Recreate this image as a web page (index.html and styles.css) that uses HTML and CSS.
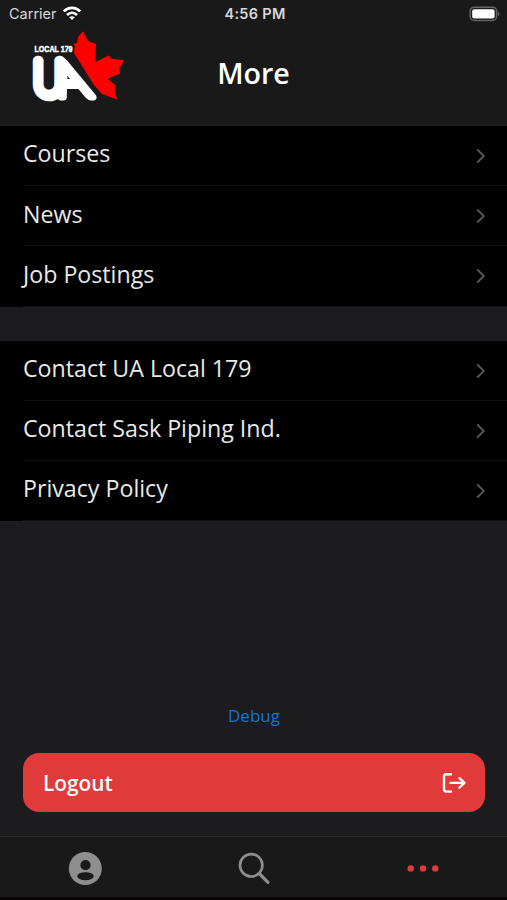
FILE: index.html
```html
<!DOCTYPE html>
<html lang="en">
  <head>
    <meta charset="UTF-8" />
    <meta name="viewport" content="width=device-width, initial-scale=1.0" />
    <title>More</title>
    <link rel="stylesheet" href="styles.css" />
  </head>
  <body>
    <svg width="0" height="0" class="defs">
      <symbol id="chevron" viewBox="0 0 12 18">
        <path d="M2.2 2.5 L8.8 9 L2.2 15.5" fill="none" stroke="currentColor" stroke-width="1.9" />
      </symbol>
    </svg>

    <header class="header">
      <div class="status-bar">
        <div class="carrier">
          <span>Carrier</span>
          <svg width="20" height="15" viewBox="0 0 20 15" fill="none" stroke="#fff" stroke-width="2.7">
            <path d="M1.8 5.4 C6.5 .8 13.5 .8 18.2 5.4" />
            <path d="M5 9 C8 6.1 12 6.1 15 9" />
            <path d="M10 14 L7.2 11.2 C8.8 9.8 11.2 9.8 12.8 11.2 Z" fill="#fff" stroke="none" />
          </svg>
        </div>
        <span class="time">4:56 PM</span>
        <svg class="battery" width="32" height="16" viewBox="0 0 32 16">
          <rect x="1.2" y="1.2" width="26.4" height="13.2" rx="4" fill="none" stroke="#656565" stroke-width="1.5" />
          <rect x="3.2" y="3.2" width="22.4" height="9.2" rx="2" fill="#fff" />
          <path d="M29 5.4 Q32 7.8 29 10.2 Z" fill="#656565" />
        </svg>
      </div>

      <div class="title-bar">
        <svg class="logo" width="96" height="92" viewBox="0 0 96 92">
          <path
            fill="#f00"
            d="M53 3.3 L57.7 12.7 L66 16 L65.3 34.3 L78.3 27.5 L82.3 31 L94 32 L89.5 40 L90 45.5 L77.7 51 L86 57.5 L84.5 62 L87 71.5 L72 66 L64 57 L44 25 L45 18.5 L43.5 16 L47 15 L48 9 Z"
          />
          <text class="logo-small" x="4.5" y="23.5" textLength="38" lengthAdjust="spacingAndGlyphs">LOCAL 179</text>
          <g class="logo-letters">
            <text transform="translate(3.4 68) scale(.91 1)" stroke-width="10.6">U</text>
            <text transform="translate(28.2 68) matrix(1.15 0 .4 1 0 0)" stroke-width="9">A</text>
          </g>
        </svg>
        <h1>More</h1>
      </div>
    </header>

    <main class="content">
      <ul class="menu">
        <li><a href="#"><span>Courses</span><svg><use href="#chevron" /></svg></a></li>
        <li><a href="#"><span>News</span><svg><use href="#chevron" /></svg></a></li>
        <li><a href="#"><span>Job Postings</span><svg><use href="#chevron" /></svg></a></li>
      </ul>

      <ul class="menu">
        <li><a href="#"><span>Contact UA Local 179</span><svg><use href="#chevron" /></svg></a></li>
        <li><a href="#"><span>Contact Sask Piping Ind.</span><svg><use href="#chevron" /></svg></a></li>
        <li><a href="#"><span>Privacy Policy</span><svg><use href="#chevron" /></svg></a></li>
      </ul>

      <div class="actions">
        <a class="debug" href="#">Debug</a>
        <button class="logout" type="button">
          <span>Logout</span>
          <svg width="24" height="22" viewBox="0 0 24 22" fill="none" stroke="#fff" stroke-width="2.4" stroke-linecap="round" stroke-linejoin="round">
            <path d="M9 2.2 H4.5 Q2 2.2 2 4.7 V17.1 Q2 19.6 4.5 19.6 H9" />
            <path d="M8.5 10.9 H22.2 M17.5 6.2 L22.4 10.9 L17.5 15.6" />
          </svg>
        </button>
      </div>
    </main>

    <nav class="tabs">
      <a href="#" aria-label="Profile">
        <svg width="34" height="34" viewBox="0 0 34 34">
          <circle cx="17.3" cy="17.5" r="16.5" fill="#8e8e8e" />
          <circle cx="17.5" cy="14.2" r="5.1" fill="#191919" />
          <ellipse cx="17.5" cy="25.2" rx="8.2" ry="4" fill="#191919" />
        </svg>
      </a>
      <a href="#" aria-label="Search">
        <svg width="34" height="34" viewBox="0 0 34 34" fill="none" stroke="#8e8e8e">
          <circle cx="14.2" cy="14.3" r="11.2" stroke-width="2.6" />
          <path d="M22.2 22.5 L31 31.3" stroke-width="3.2" stroke-linecap="round" />
        </svg>
      </a>
      <a href="#" aria-label="More">
        <svg width="34" height="34" viewBox="0 0 34 34" fill="#e03a3a">
          <circle cx="4.7" cy="17.4" r="3.2" />
          <circle cx="17" cy="17.4" r="3.2" />
          <circle cx="29.3" cy="17.4" r="3.2" />
        </svg>
      </a>
    </nav>
  </body>
</html>
```

FILE: styles.css
```css
* {
  box-sizing: border-box;
}

body {
  margin: 0;
  height: 100vh;
  display: flex;
  flex-direction: column;
  overflow: hidden;
  background: #1c1c1e;
  color: #e9e9e9;
  font-family: "Open Sans", "Noto Sans", sans-serif;
}

a {
  color: inherit;
  text-decoration: none;
}

svg {
  display: block;
}

.defs {
  position: absolute;
}

.header {
  height: 126px;
  flex: none;
  background: #191919;
}

.status-bar {
  display: grid;
  grid-template-columns: 1fr auto 1fr;
  align-items: center;
  height: 27px;
  padding: 0 6px 0 9px;
  font-family: Inter, sans-serif;
  font-size: 14.5px;
  color: #d8d8d8;
}

.carrier {
  display: flex;
  align-items: center;
  gap: 5px;
}

.time {
  font-weight: 600;
  letter-spacing: 0.3px;
}

.battery {
  justify-self: end;
}

.title-bar {
  display: grid;
  grid-template-columns: 1fr auto 1fr;
  align-items: start;
  padding-top: 1px;
}

.logo {
  margin-left: 30px;
}

.logo-small {
  font: bold 8.5px "Liberation Sans", sans-serif;
  fill: #fff;
  stroke: #fff;
  stroke-width: 0.5;
}

.logo-letters {
  font: 100 47px Inter, sans-serif;
  fill: #fff;
  stroke: #fff;
  stroke-linejoin: round;
}

h1 {
  margin: 25px 0 0;
  color: #fff;
  font-size: 28.6px;
  font-weight: 600;
  line-height: 40px;
}

.content {
  flex: 1;
  display: flex;
  flex-direction: column;
}

.menu {
  list-style: none;
  margin: 0 0 34px;
  padding: 0 0 0 23px;
  background: #000;
}

.menu a {
  display: flex;
  justify-content: space-between;
  height: 60.2px;
  padding: 11.4px 20px 0 0;
  border-bottom: 1px solid #111;
  font-size: 23.2px;
  line-height: 32px;
}

.menu svg {
  width: 12px;
  height: 18px;
  margin-top: 9.6px;
  color: #565656;
}

.actions {
  margin-top: auto;
  padding: 0 22px 24px 23px;
  text-align: center;
}

.debug {
  display: block;
  margin-bottom: 25px;
  color: #1672d4;
  font-size: 17px;
  line-height: 24px;
}

.logout {
  display: flex;
  justify-content: space-between;
  align-items: center;
  width: 100%;
  height: 59px;
  padding: 0 19px 0 20px;
  border: none;
  border-radius: 16px;
  background: #e03a3a;
  color: #fff;
  font: 600 20.8px "Open Sans", "Noto Sans", sans-serif;
}

.tabs {
  display: grid;
  grid-template-columns: repeat(3, 1fr);
  justify-items: center;
  height: 64px;
  padding-top: 14px;
  border-top: 1px solid #2b2b2c;
  border-bottom: 3px solid #0c0406;
  background: #191919;
}
```
